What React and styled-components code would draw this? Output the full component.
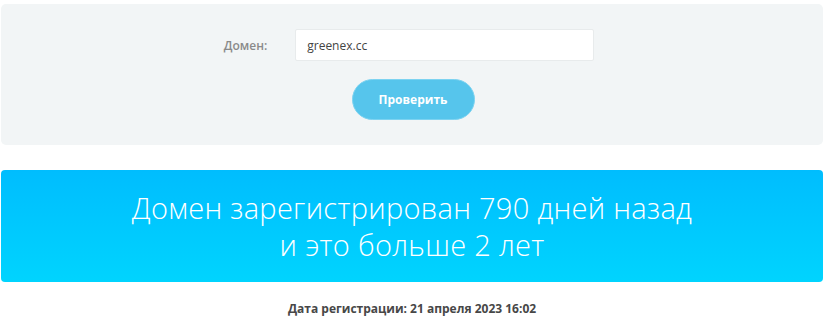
import React from "react";
import styled, { createGlobalStyle } from "styled-components";

const Global = createGlobalStyle`
  html, body { margin: 0; padding: 0; background: #fff; }
  body { font-family: "Open Sans", "Noto Sans", sans-serif; }
`;

const Page = styled.div`
  padding: 4px 1px 0 1px;
`;

const FormPanel = styled.div`
  background: #f2f5f6;
  border-radius: 5px;
  padding: 25px 0 25px;
  display: flex;
  flex-direction: column;
  align-items: center;
  gap: 18px;
`;

const Row = styled.div`
  display: flex;
  align-items: center;
  gap: 28px;
  margin-left: -6px;
`;

const Label = styled.label`
  font-size: 12px;
  font-weight: 600;
  color: #8a8a8a;
`;

const Input = styled.div`
  box-sizing: border-box;
  width: 299px;
  height: 32px;
  background: #fff;
  border: 1px solid #e8ebec;
  border-radius: 2px;
  padding: 0 11px;
  display: flex;
  align-items: center;
  font-size: 12px;
  color: #444;
`;

const Button = styled.button`
  box-sizing: border-box;
  width: 123px;
  height: 41px;
  border-radius: 21px;
  border: 1px solid #7dd3f1;
  background: #56c5ec;
  color: #fff;
  font-family: inherit;
  font-size: 12px;
  font-weight: 700;
  margin-left: 2px;
`;

const Banner = styled.div`
  margin-top: 25px;
  height: 112px;
  box-sizing: border-box;
  border-radius: 4px;
  background: linear-gradient(180deg, #00bdfe 0%, #00d4fe 100%);
  display: flex;
  flex-direction: column;
  align-items: center;
  justify-content: center;
  color: #fff;
  font-size: 29px;
  letter-spacing: 0.3px;
  font-weight: 300;
  line-height: 37px;
  text-align: center;
`;

const DateLine = styled.div`
  margin-top: 18px;
  text-align: center;
  font-size: 12px;
  font-weight: 700;
  color: #474747;
  line-height: 18px;
`;

export default function App() {
  return (
    <Page>
      <Global />
      <FormPanel>
        <Row>
          <Label>Домен:</Label>
          <Input>greenex.cc</Input>
        </Row>
        <Button>Проверить</Button>
      </FormPanel>
      <Banner>
        <div>Домен зарегистрирован 790 дней назад</div>
        <div>и это больше 2 лет</div>
      </Banner>
      <DateLine>Дата регистрации: 21 апреля 2023 16:02</DateLine>
    </Page>
  );
}
